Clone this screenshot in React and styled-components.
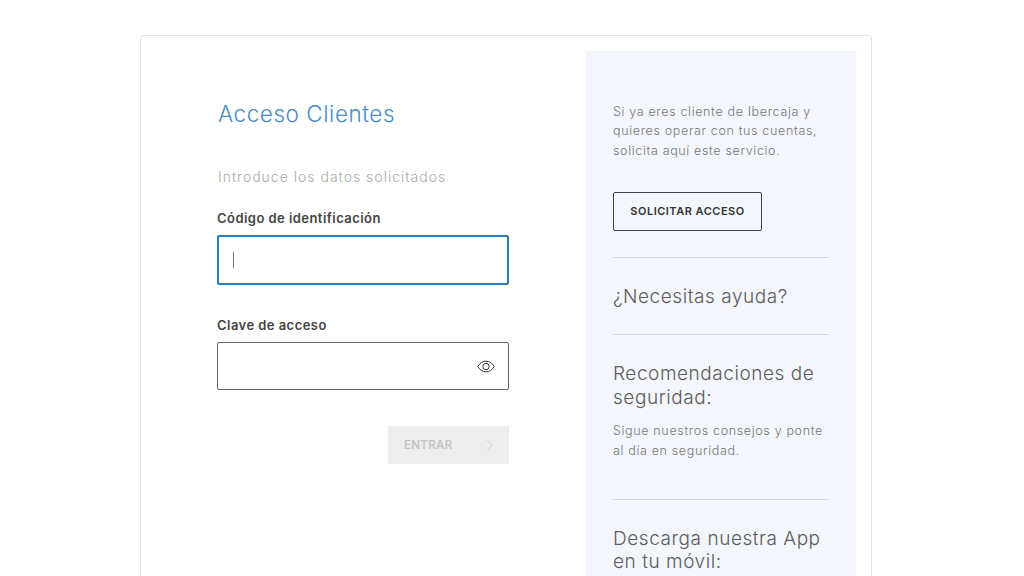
import React from "react";
import styled, { createGlobalStyle } from "styled-components";

const GlobalStyle = createGlobalStyle`
  html, body {
    margin: 0;
    padding: 0;
    height: 576px;
    overflow: hidden;
    background: #ffffff;
    font-family: "Inter", "Liberation Sans", sans-serif;
  }
  * {
    box-sizing: border-box;
  }
`;

const Card = styled.main`
  display: flex;
  justify-content: space-between;
  width: 732px;
  height: 700px;
  margin: 35px 0 0 140px;
  padding: 15px 15px 0 76px;
  border: 1px solid #e4e4e4;
  border-radius: 3px;
`;

const LoginColumn = styled.section`
  display: flex;
  flex-direction: column;
  width: 293px;
  padding-top: 49px;
`;

const Title = styled.h1`
  margin: 0 0 0 1px;
  font-size: 22.5px;
  line-height: 28px;
  font-weight: 300;
  letter-spacing: 0.55px;
  color: #4a8cc7;
`;

const Intro = styled.p`
  margin: 40px 0 0 1px;
  font-size: 14px;
  line-height: 18px;
  font-weight: 300;
  letter-spacing: 1px;
  color: #aaaaaa;
`;

const Label = styled.label`
  display: block;
  margin-top: ${(props) => props.$top}px;
  font-size: 13px;
  line-height: 16px;
  font-weight: 600;
  letter-spacing: 0.45px;
  color: #444444;
`;

const Field = styled.div`
  display: flex;
  align-items: center;
  justify-content: ${(props) => (props.$focused ? "flex-start" : "flex-end")};
  width: 292px;
  height: ${(props) => (props.$focused ? 50 : 48)}px;
  margin-top: 9px;
  padding: 0 13px 0 14px;
  background: #ffffff;
  border: ${(props) => (props.$focused ? "2px solid #2a7dbb" : "1px solid #666666")};
  border-radius: 2px;
`;

const Caret = styled.span`
  width: 1px;
  height: 16px;
  background: #777777;
`;

const EnterButton = styled.button`
  display: flex;
  align-items: center;
  justify-content: space-between;
  align-self: flex-start;
  width: 121px;
  height: 38px;
  margin: 36px 0 0 171px;
  padding: 0 15px 0 16px;
  border: 0;
  background: #eeeeee;
  font-family: inherit;
  font-size: 11.5px;
  font-weight: 600;
  letter-spacing: 0.3px;
  color: #c4c4c4;
`;

const Aside = styled.aside`
  width: 270px;
  height: 600px;
  padding: 51px 27px 0;
  background: #f3f6fc;
`;

const SmallText = styled.p`
  margin: ${(props) => props.$top || 0}px 0 0;
  font-size: 12.5px;
  line-height: 19.3px;
  font-weight: 300;
  letter-spacing: 0.65px;
  color: #777777;
  white-space: nowrap;
`;

const OutlineButton = styled.button`
  display: block;
  width: 149px;
  height: 39px;
  margin-top: 32px;
  padding: 0;
  background: transparent;
  border: 1px solid #444444;
  border-radius: 2px;
  font-family: inherit;
  font-size: 11px;
  font-weight: 600;
  letter-spacing: 0.5px;
  color: #333333;
`;

const Divider = styled.hr`
  width: 216px;
  height: 1px;
  margin: ${(props) => props.$top}px 0 0;
  border: 0;
  background: #d3d9e4;
`;

const Heading = styled.h2`
  margin: ${(props) => props.$top}px 0 0;
  font-size: 19px;
  line-height: 23.5px;
  font-weight: 300;
  letter-spacing: 0.55px;
  color: #5c5c5c;
  white-space: nowrap;
`;

const EyeIcon = () => (
  <svg width="18" height="13" viewBox="0 0 18 13" fill="none" stroke="#333333" strokeWidth="1">
    <path d="M.8 6.500C2.800 3 5.600 1.200 9 1.200S15.200 3 17.200 6.500C15.200 10 12.400 11.800 9 11.800S2.800 10 .8 6.500Z" />
    <circle cx="9" cy="6.500" r="3.200" />
  </svg>
);

const ChevronIcon = () => (
  <svg width="8" height="12" viewBox="0 0 8 12" fill="none" stroke="#d2d2d2" strokeWidth="1">
    <path d="M1 1l5.500 5L1 11" />
  </svg>
);

export default function App() {
  return (
    <>
      <GlobalStyle />
      <Card>
        <LoginColumn>
          <Title>Acceso Clientes</Title>
          <Intro>Introduce los datos solicitados</Intro>
          <Label $top={24}>Código de identificación</Label>
          <Field $focused>
            <Caret />
          </Field>
          <Label $top={32}>Clave de acceso</Label>
          <Field>
            <EyeIcon />
          </Field>
          <EnterButton disabled>
            ENTRAR
            <ChevronIcon />
          </EnterButton>
        </LoginColumn>
        <Aside>
          <SmallText>
            Si ya eres cliente de Ibercaja y
            <br />
            quieres operar con tus cuentas,
            <br />
            solicita aquí este servicio.
          </SmallText>
          <OutlineButton>SOLICITAR ACCESO</OutlineButton>
          <Divider $top={26} />
          <Heading $top={27}>¿Necesitas ayuda?</Heading>
          <Divider $top={26} />
          <Heading $top={27}>
            Recomendaciones de
            <br />
            seguridad:
          </Heading>
          <SmallText $top={12}>
            Sigue nuestros consejos y ponte
            <br />
            al día en seguridad.
          </SmallText>
          <Divider $top={39} />
          <Heading $top={27}>
            Descarga nuestra App
            <br />
            en tu móvil:
          </Heading>
        </Aside>
      </Card>
    </>
  );
}
